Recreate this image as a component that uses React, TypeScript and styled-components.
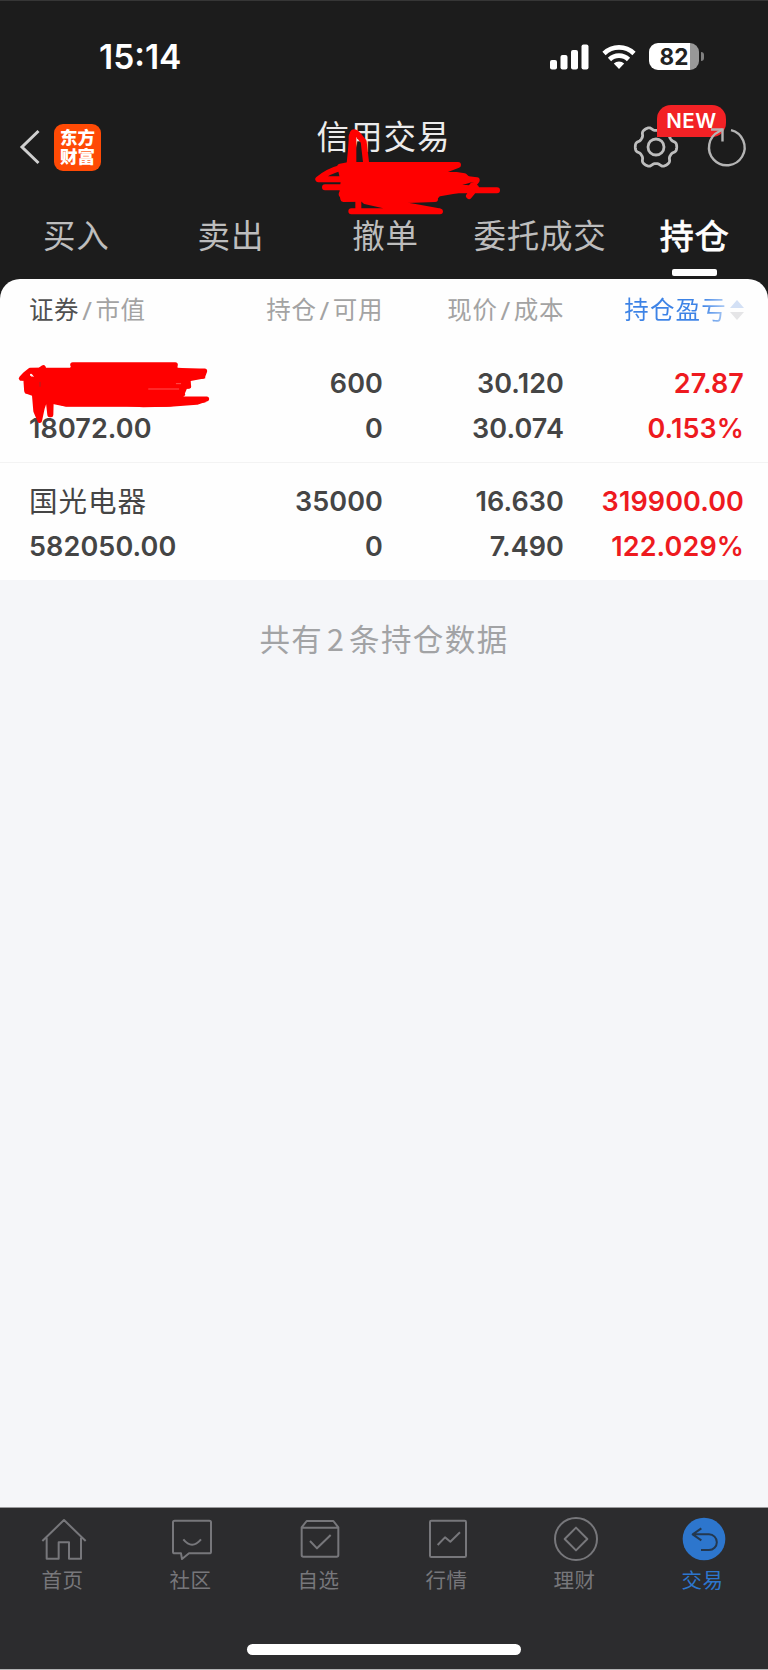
import React from 'react';
import styled, { createGlobalStyle } from 'styled-components';

const Global = createGlobalStyle`
  * { box-sizing: border-box; }
  body { margin: 0; background: #f5f6f9; }
`;

const Screen = styled.div`
  width: 768px;
  height: 1670px;
  display: flex;
  flex-direction: column;
  background: #f5f6f9;
  font-family: Inter, 'Noto Sans CJK SC', sans-serif;
  overflow: hidden;
`;

const Header = styled.header`
  position: relative;
  height: 300px;
  margin-bottom: -21px;
  background: #1c1c1c;
  border-top: 1px solid #363636;
  flex: none;
`;

const StatusBar = styled.div`
  height: 113px;
  padding: 0 64px 2px 99px;
  display: flex;
  align-items: center;
  justify-content: space-between;
`;

const Clock = styled.span`
  color: #fff;
  font-size: 33.5px;
  font-weight: 600;
  line-height: 40px;
`;

const StatusIcons = styled.div`
  display: flex;
  align-items: center;
  gap: 13px;
`;

const BatteryWrap = styled.div`
  display: flex;
  align-items: center;
  gap: 2px;
`;

const Battery = styled.div`
  width: 50px;
  height: 27px;
  border-radius: 9px;
  background: linear-gradient(90deg, #fff 41px, #989898 41px);
  color: #222;
  font-size: 22.5px;
  font-weight: 700;
  line-height: 27px;
  text-align: center;
`;

const BatteryTip = styled.div`
  width: 3px;
  height: 9px;
  border-radius: 0 3px 3px 0;
  background: #808080;
`;

const TitleBar = styled.div`
  height: 66px;
  padding: 0 19px 0 18px;
  display: grid;
  grid-template-columns: 1fr auto 1fr;
`;

const TitleLeft = styled.div`
  display: flex;
  align-items: center;
  gap: 12px;
`;

const Logo = styled.div`
  width: 47px;
  height: 47px;
  padding-top: 4px;
  border-radius: 9px;
  background: #ff4a05;
  color: #fff;
  font-size: 17.5px;
  font-weight: 900;
  line-height: 19.5px;
  text-align: center;
`;

const Title = styled.h1`
  margin: 0;
  color: #ececec;
  font-size: 32.5px;
  font-weight: 400;
  line-height: 47px;
  letter-spacing: 1px;
`;

const Actions = styled.div`
  display: flex;
  align-items: center;
  justify-content: flex-end;
  gap: 26px;
`;

const GearSlot = styled.div`
  position: relative;
  width: 46px;
  height: 46px;
`;

const RefreshSlot = styled.div`
  position: relative;
  z-index: 2;
  width: 44px;
  height: 46px;
`;

const NewBadge = styled.span`
  position: absolute;
  left: 24px;
  top: -19px;
  width: 69px;
  height: 32px;
  border-radius: 14px 14px 14px 0;
  background: #f22125;
  color: #fff;
  font-size: 20.5px;
  font-weight: 600;
  line-height: 32px;
  letter-spacing: 0.6px;
  text-align: center;
`;

const Tabs = styled.nav`
  display: flex;
  margin: 36px -4px 0 -1px;
`;

const Tab = styled.div<{ $active?: boolean }>`
  flex: 1;
  display: flex;
  flex-direction: column;
  align-items: center;
  color: ${p => (p.$active ? '#fff' : '#bdbdbd')};
  font-size: ${p => (p.$active ? 34 : 32.5)}px;
  -webkit-text-stroke: ${p => (p.$active ? '0.8px #fff' : '0')};
  line-height: 41px;
  letter-spacing: 0.8px;
  white-space: nowrap;

  &::after {
    content: '';
    display: ${p => (p.$active ? 'block' : 'none')};
    width: 45px;
    height: 7px;
    margin-top: 12px;
    border-radius: 2px;
    background: #fff;
  }
`;

const Card = styled.section`
  position: relative;
  height: 301px;
  flex: none;
  border-radius: 20px 20px 0 0;
  background: #fefefe;
`;

const Row = styled.div<{ $top: number; $height: number; $line?: boolean }>`
  display: grid;
  align-items: start;
  grid-template-columns: 202px 152px 181px 180px;
  height: ${p => p.$height}px;
  padding: ${p => p.$top}px 24px 0 29px;
  border-bottom: ${p => (p.$line ? '1px solid #f3f3f3' : '0')};
`;

const HeadCell = styled.div<{ $left?: boolean }>`
  display: flex;
  justify-content: ${p => (p.$left ? 'flex-start' : 'flex-end')};
  align-items: center;
  gap: 3px;
  color: #a3a3a3;
  font-size: 24.5px;
  line-height: 40px;
  letter-spacing: 0.6px;
  white-space: nowrap;
`;

const Strong = styled.span`
  color: #505050;
`;

const Slash = styled.span`
  font-family: 'Noto Sans', sans-serif;
  font-size: 26px;
`;

const SortLabel = styled.span`
  letter-spacing: 1.2px;
  background: linear-gradient(90deg, #3d83e6 76%, #b5d0f5 100%);
  background-clip: text;
  -webkit-background-clip: text;
  color: transparent;
`;

const Cell = styled.div<{ $left?: boolean; $red?: boolean }>`
  display: flex;
  flex-direction: column;
  align-items: ${p => (p.$left ? 'flex-start' : 'flex-end')};
  color: ${p => (p.$red ? '#ee1a1f' : '#454545')};
  font-size: 27px;
  font-weight: 600;
  line-height: 45px;
  letter-spacing: 0.1px;
  white-space: nowrap;
`;

const StockName = styled.span`
  height: 45px;
  font-size: 28.5px;
  font-weight: 400;
  letter-spacing: 1px;
`;

const Summary = styled.p`
  flex: 1;
  margin: 0;
  padding-top: 38px;
  color: #a2a3a5;
  font-family: 'Noto Sans CJK SC', sans-serif;
  font-size: 30.5px;
  line-height: 40px;
  letter-spacing: 1.4px;
  word-spacing: -4.5px;
  text-align: center;
`;

const Footer = styled.footer`
  height: 163px;
  flex: none;
  display: flex;
  flex-direction: column;
  align-items: center;
  border-top: 1px solid #9a9a9c;
  border-bottom: 1px solid #b5b5b6;
  background: #2c2c2e;
`;

const FooterTabs = styled.nav`
  display: flex;
  width: 768px;
  padding-top: 7px;
`;

const FooterTab = styled.div<{ $active?: boolean }>`
  flex: 1;
  display: flex;
  flex-direction: column;
  align-items: center;
  color: ${p => (p.$active ? '#2d76cd' : '#77777b')};
`;

const FooterLabel = styled.span`
  margin: 3px 3px 0 0;
  font-size: 20.5px;
  line-height: 30px;
  letter-spacing: 0.6px;
`;

const HomeBar = styled.div`
  width: 274px;
  height: 11px;
  margin-top: 48px;
  border-radius: 6px;
  background: #fff;
`;

const Marker = styled.svg<{ $x: number; $y: number }>`
  position: absolute;
  z-index: 3;
  left: ${p => p.$x}px;
  top: ${p => p.$y}px;
  fill: none;
  stroke: #ff0000;
  stroke-width: 18;
  stroke-linecap: round;
  stroke-linejoin: round;
`;

// Six soft teeth around a ring, flattened at crest and trough.
const gearPath = Array.from({ length: 144 }, (_, i) => {
  const a = (i / 144) * Math.PI * 2;
  const r = 18.6 + 2.2 * Math.tanh(1.7 * Math.cos(6 * a) + 0.3);
  return `${i ? 'L' : 'M'}${(23 + r * Math.cos(a)).toFixed(2)} ${(23 + r * Math.sin(a)).toFixed(2)}`;
}).join('') + 'Z';

const icons: Record<string, React.ReactNode> = {
  首页: <path d="M7 78 72 15l65 63M20 68v63h36V82h31v49h36V68" />,
  社区: <path d="M20 17h104q5 0 5 5v88q0 5-5 5H63L42 132l-3-17H20q-5 0-5-5V22q0-5 5-5ZM46 73q26 32 53 0" />,
  自选: <path d="M17 37v83q0 5 5 5h100q5 0 5-5V37L112 18H32ZM17 38h110M42 78l21 22 41-40" />,
  行情: <path d="M22 17h100q4 0 4 4v101q0 4-4 4H22q-4 0-4-4V21q0-4 4-4ZM41 90l22-23 16 13 29-28" />,
  理财: <><circle cx="72" cy="72" r="63" /><path d="m72 38 34 34-34 34-34-34Z" /></>,
  交易: <><circle cx="72" cy="72" r="64" fill="#2d76cd" stroke="none" /><path d="M64 40 38 58l26 18M38 58h49a23.5 23.5 0 0 1 0 47H63" stroke="#24384f" /></>,
};

const rows = [
  { name: '', value: '18072.00', hold: '600', free: '0', price: '30.120', cost: '30.074', pl: '27.87', rate: '0.153%' },
  { name: '国光电器', value: '582050.00', hold: '35000', free: '0', price: '16.630', cost: '7.490', pl: '319900.00', rate: '122.029%' },
];

export default function App() {
  return (
    <Screen>
      <Global />
      <Header>
        <StatusBar>
          <Clock>15:14</Clock>
          <StatusIcons>
            <svg width="39" height="26" viewBox="0 0 39 26" fill="#fff">
              <rect x="0" y="16" width="7" height="9.5" rx="2" />
              <rect x="10.5" y="11" width="7" height="14.5" rx="2" />
              <rect x="21" y="6" width="7" height="19.5" rx="2" />
              <rect x="31.5" y="0.5" width="7" height="25" rx="2" />
            </svg>
            <svg width="34" height="26" viewBox="0 0 34 26" fill="none" stroke="#fff" strokeWidth="4.6">
              <path d="M2 9.5a21.5 21.5 0 0 1 30 0" />
              <path d="M7.5 15.5a13.5 13.5 0 0 1 19 0" />
              <path d="M17 25l-5.2-5.4a7.4 7.4 0 0 1 10.4 0Z" fill="#fff" stroke="none" />
            </svg>
            <BatteryWrap>
              <Battery>82</Battery>
              <BatteryTip />
            </BatteryWrap>
          </StatusIcons>
        </StatusBar>
        <TitleBar>
          <TitleLeft>
            <svg width="24" height="38" viewBox="0 0 24 38" fill="none" stroke="#cfcfcf" strokeWidth="3">
              <path d="M20.5 3 4 19l16.500 16" />
            </svg>
            <Logo>东方<br />财富</Logo>
          </TitleLeft>
          <Title>信用交易</Title>
          <Actions>
            <GearSlot>
              <svg width="46" height="46" viewBox="0 0 46 46" fill="none" stroke="#bdbdbd" strokeWidth="2.8">
                <path d={gearPath} />
                <circle cx="23" cy="23" r="8" />
              </svg>
              <NewBadge>NEW</NewBadge>
            </GearSlot>
            <RefreshSlot>
              <svg width="44" height="46" viewBox="0 0 44 46" fill="none" stroke="#b4b4b4" strokeWidth="2.4">
                <path d="M26 6.200A17.800 17.800 0 1 1 14 7.500L17.500 5.500" />
                <path d="M6 5.500h11.500v12" />
              </svg>
            </RefreshSlot>
          </Actions>
        </TitleBar>
        <Tabs>
          <Tab>买入</Tab>
          <Tab>卖出</Tab>
          <Tab>撤单</Tab>
          <Tab>委托成交</Tab>
          <Tab $active>持仓</Tab>
        </Tabs>
        <Marker $x={305} $y={114} width="200" height="110" viewBox="0 0 600 330">
          <path fill="#f00" d="M106 155 133 150 200 150 459 150 400 172 478 184 490 195 456 205 456 216 490 220 400 236 384 252 300 250 115 252 112 235 116 200Z" />
          <path d="M133 155 143 55Q148 47 160 60L176 80 184 150M145 70V150" />
          <path strokeWidth="22" d="M142 65V150" />
          <path d="M110 158Q70 168 40 193L120 193M60 217H130M110 238H390M400 226H576M484 192 515 196 496 220 513 218 492 243M160 250V285M139 289H405L330 276 220 258 390 252M180 258 300 285" />
        </Marker>
      </Header>
      <Card>
        <Row $top={11} $height={63}>
          <HeadCell $left><Strong>证券</Strong><Slash>/</Slash>市值</HeadCell>
          <HeadCell>持仓<Slash>/</Slash>可用</HeadCell>
          <HeadCell>现价<Slash>/</Slash>成本</HeadCell>
          <HeadCell>
            <SortLabel>持仓盈亏</SortLabel>
            <svg width="14" height="22" viewBox="0 0 14 22">
              <path d="M7 1l7 8H0Z" fill="#d3e0f5" />
              <path d="M7 21l7-8H0Z" fill="#e5e5e7" />
            </svg>
          </HeadCell>
        </Row>
        {rows.map((r, i) => (
          <Row key={r.value} $top={i ? 16 : 19} $height={i ? 117 : 121} $line={i === 0}>
            <Cell $left><StockName>{r.name}</StockName><span>{r.value}</span></Cell>
            <Cell><span>{r.hold}</span><span>{r.free}</span></Cell>
            <Cell><span>{r.price}</span><span>{r.cost}</span></Cell>
            <Cell $red><span>{r.pl}</span><span>{r.rate}</span></Cell>
          </Row>
        ))}
        <Marker $x={10} $y={76} width="205" height="80" viewBox="0 0 615 240">
          <path fill="#f00" stroke="none" d="M100 38 180 38 190 26 500 26 503 38 582 43 586 70 542 78 542 99 520 103 526 120 510 134 590 142 470 155 400 157 350 154H165L126 143 45 115 45 85 72 65 60 50 45 60 60 39Z" />
          <path strokeWidth="15" d="M188 29H496M100 38 88 46H60L45 58 34 70 68 72M62 47 48 80 50 108H110M80 48H584L578 64H530L536 94H420M120 60H540L518 112 505 132H590L560 142 480 148H170L130 140" />
          <path fill="#f00" strokeWidth="14" d="M72 110 77 168 89 197 97 160 112 115ZM112 115 119 180 123 180 124 140Z" />
          <path stroke="#ff9999" strokeWidth="1.6" d="M416 102H506M499 86H512" />
          <path stroke="#fff" strokeWidth="6" d="M63 59v1" />
          <path stroke="#a22" strokeWidth="3" d="M90 82v12" />
        </Marker>
      </Card>
      <Summary>共有 2 条持仓数据</Summary>
      <Footer>
        <FooterTabs>
          {Object.entries(icons).map(([label, icon]) => (
            <FooterTab key={label} $active={label === '交易'}>
              <svg width="48" height="48" viewBox="0 0 144 144" fill="none" stroke="#77777b" strokeWidth="6" strokeLinejoin="round">
                {icon}
              </svg>
              <FooterLabel>{label}</FooterLabel>
            </FooterTab>
          ))}
        </FooterTabs>
        <HomeBar />
      </Footer>
    </Screen>
  );
}
